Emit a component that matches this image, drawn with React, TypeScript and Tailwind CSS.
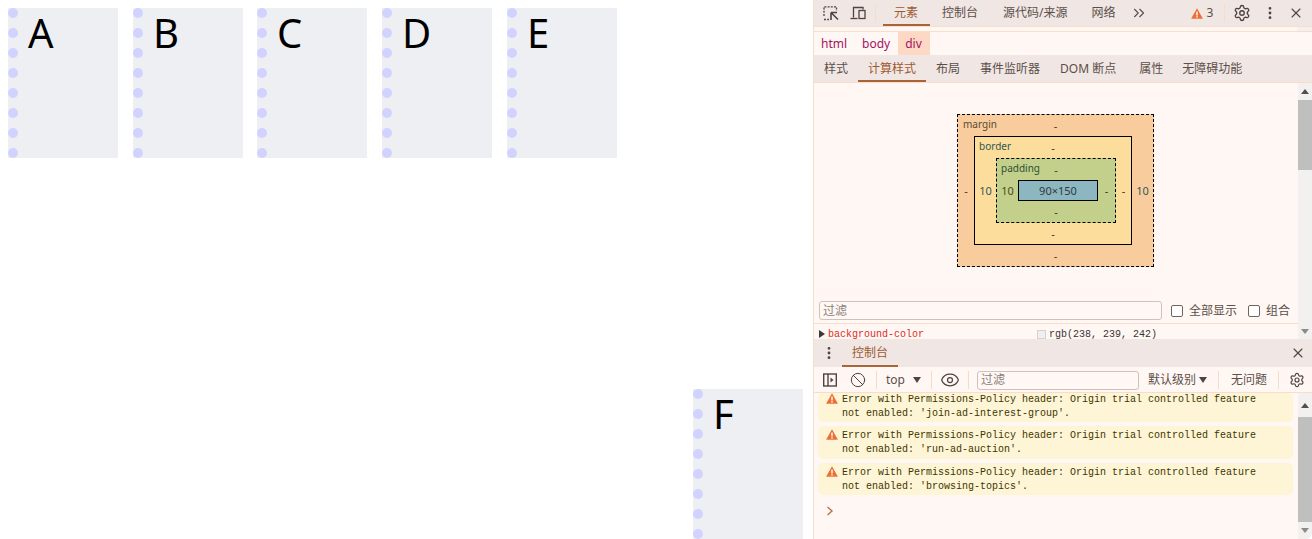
import React from 'react';
import { Settings, X, EllipsisVertical, ChevronsRight, Ban, Eye } from 'lucide-react';

const cjk = { fontFamily: '"Noto Sans", "Noto Sans CJK SC", sans-serif' };

function Sheet({ label, className = '' }: { label: string; className?: string }) {
  return (
    <div className={`relative h-[150px] w-[110px] shrink-0 bg-[#eeeff2] ${className}`}>
      <div className="absolute left-0 top-0 flex flex-col gap-[10px]">
        {[0, 1, 2, 3, 4, 5, 6, 7].map((i) => (
          <div key={i} className="h-[10px] w-[10px] rounded-full bg-[#d2d2ff]" />
        ))}
      </div>
      <div className="pl-[20px] text-[40px] leading-[50px] text-black">{label}</div>
    </div>
  );
}

function Warn({ className = '' }: { className?: string }) {
  return (
    <svg viewBox="0 0 12 11" className={`h-[11px] w-[12px] shrink-0 ${className}`}>
      <path d="M6 0.3 11.9 10.7H0.1Z" fill="#ec6f35" />
      <rect x="5.3" y="3.6" width="1.4" height="3.9" fill="#fff" />
      <rect x="5.3" y="8.2" width="1.4" height="1.4" fill="#fff" />
    </svg>
  );
}

function InspectIcon() {
  return (
    <svg viewBox="0 0 16 16" className="h-4 w-4" fill="none" stroke="#4f4440" strokeWidth="1.3">
      <path d="M1 11V1.8h12.5V6" strokeDasharray="2 1.2" />
      <path d="M1 14.5h5" strokeDasharray="2 1.2" />
      <path d="M8 7.5v7.5M8 7.5h6M8 7.5l7 7" strokeWidth="1.6" />
    </svg>
  );
}

function DeviceIcon() {
  return (
    <svg viewBox="0 0 16 16" className="h-4 w-4" fill="none" stroke="#4f4440" strokeWidth="1.3">
      <path d="M3.5 12.5V2.5h9.5v2" />
      <path d="M0.5 13.5h7" />
      <rect x="9" y="5.5" width="6" height="8" />
    </svg>
  );
}

function SidebarIcon() {
  return (
    <svg viewBox="0 0 14 14" className="h-[14px] w-[14px]" fill="none" stroke="#4f4440" strokeWidth="1.4">
      <rect x="0.7" y="1" width="12.6" height="12" />
      <path d="M5 1v12" />
      <path d="M7.5 4.5v5l3-2.5z" fill="#4f4440" stroke="none" />
    </svg>
  );
}

function Divider() {
  return <div className="h-[18px] w-px shrink-0 bg-[#f8dccb]" />;
}

function Tab({ label, active = false, className = '' }: { label: string; active?: boolean; className?: string }) {
  return (
    <div
      className={`flex h-full items-center whitespace-nowrap border-b-2 pt-[2px] text-[12px] ${
        active ? 'border-[#a9643a] text-[#9c5a33]' : 'border-transparent text-[#5c4f4a]'
      } ${className}`}
    >
      {label}
    </div>
  );
}

function Scrollbar({ top, thumb, after }: { top: number; thumb: number; after: number }) {
  return (
    <div className="flex h-full w-[14px] shrink-0 flex-col items-center bg-[#f3f1f0]">
      <div className="flex w-full items-center justify-center" style={{ height: top }}>
        <div className="h-0 w-0 border-x-[4px] border-b-[5px] border-x-transparent border-b-[#505050]" />
      </div>
      <div className="w-full bg-[#bfbfbf]" style={{ height: thumb }} />
      <div style={{ height: after }} className="w-full" />
      <div className="flex h-[16px] w-full items-center justify-center">
        <div className="h-0 w-0 border-x-[4px] border-t-[5px] border-x-transparent border-t-[#8a8a8a]" />
      </div>
    </div>
  );
}

function Check({ label }: { label: string }) {
  return (
    <div className="flex items-center gap-[6px]">
      <div className="h-[12px] w-[12px] rounded-[2px] border border-[#6f6560] bg-white" />
      <span className="text-[12px] text-[#5c4f4a]">{label}</span>
    </div>
  );
}

function Val({ children, className = '' }: { children: React.ReactNode; className?: string }) {
  return <div className={`flex items-center justify-center text-[11px] leading-none ${className}`}>{children}</div>;
}

function BoxModel() {
  return (
    <div className="relative flex h-[153px] w-[197px] flex-col border border-dashed border-black bg-[#f9cc9d] text-[#3a3a3a]">
      <span className="absolute left-[5px] top-[2px] text-[10px] leading-[14px] text-[#5a4a30]">margin</span>
      <Val className="h-[21px]">-</Val>
      <div className="flex">
        <Val className="w-[16px]">-</Val>
        <div className="relative flex h-[109px] w-[158px] flex-col border border-black bg-[#fddd9b]">
          <span className="absolute left-[4px] top-[2px] text-[10px] leading-[14px] text-[#2f5a50]">border</span>
          <Val className="h-[21px]">-</Val>
          <div className="flex">
            <Val className="w-[21px] text-[#2f5a60]">10</Val>
            <div className="relative flex h-[65px] w-[120px] flex-col border border-dashed border-black bg-[#c3d08b]">
              <span className="absolute left-[4px] top-[2px] text-[10px] leading-[14px] text-[#2f5030]">padding</span>
              <Val className="h-[21px]">-</Val>
              <div className="flex">
                <Val className="w-[21px] text-[#4a4a20]">10</Val>
                <Val className="h-[21px] w-[80px] border border-black bg-[#8cb6c0] text-[#303a40]">90×150</Val>
                <Val className="w-[17px]">-</Val>
              </div>
              <Val className="h-[21px]">-</Val>
            </div>
            <Val className="w-[15px]">-</Val>
          </div>
          <Val className="h-[21px]">-</Val>
        </div>
        <Val className="w-[21px] text-[#2f5a60]">10</Val>
      </div>
      <Val className="h-[21px]">-</Val>
    </div>
  );
}

function Message({ feature, className = '' }: { feature: string; className?: string }) {
  return (
    <div className={`flex rounded-[5px] bg-[#fdf5d6] pl-[8px] ${className}`}>
      <Warn className="mr-[4px]" />
      <div className="text-[10px] leading-[14px] text-[#3f3500]" style={{ fontFamily: '"Liberation Mono", monospace' }}>
        <div className="whitespace-pre">Error with Permissions-Policy header: Origin trial controlled feature</div>
        <div className="whitespace-pre">not enabled: '{feature}'.</div>
      </div>
    </div>
  );
}

export default function App() {
  return (
    <div className="flex h-[539px] w-[1312px] overflow-hidden rounded-b-[6px] bg-white" style={cjk}>
      {/* page */}
      <div className="flex w-[813px] shrink-0 flex-col justify-between">
        <div className="flex pl-[8px] pt-[8px]">
          <Sheet label="A" className="mr-[15px]" />
          <Sheet label="B" className="mr-[14px]" />
          <Sheet label="C" className="mr-[15px]" />
          <Sheet label="D" className="mr-[15px]" />
          <Sheet label="E" />
        </div>
        <Sheet label="F" className="mr-[10px] self-end" />
      </div>

      {/* devtools */}
      <div className="flex w-[499px] shrink-0 flex-col border-l border-[#f8dccb] bg-[#fff7f4]">
        <div className="flex h-[27px] shrink-0 items-center border-b border-[#fbdccb] bg-[#f0e6e3] pl-[9px] text-[#5c4f4a]">
          <InspectIcon />
          <div className="ml-[11px]"><DeviceIcon /></div>
          <div className="ml-[9px] mr-[7px]"><Divider /></div>
          <Tab label="元素" active className="pl-[11px] pr-[12px]" />
          <Tab label="控制台" className="pl-[12px] pr-[12px]" />
          <Tab label="源代码/来源" className="pl-[13px] pr-[12px]" />
          <Tab label="网络" className="px-[12px]" />
          <ChevronsRight size={18} strokeWidth={1.5} className="ml-[2px] text-[#5c4f4a]" />
          <Warn className="ml-[43px]" />
          <span className="ml-[4px] text-[12px]">3</span>
          <div className="ml-[11px] mr-[8px]"><Divider /></div>
          <Settings size={18} strokeWidth={1.8} className="text-[#4f4440]" />
          <EllipsisVertical size={16} strokeWidth={2.2} className="ml-[11px] text-[#4f4440]" />
          <X size={16} strokeWidth={1.6} className="ml-[10px] text-[#4f4440]" />
        </div>
        <div className="flex h-[5px] shrink-0 justify-end border-b border-[#fbdccb]">
          <div className="w-[15px] bg-[#f3f1f0]" />
        </div>
        <div className="flex h-[23px] shrink-0 items-stretch text-[12px] text-[#a5125e]">
          <span className="flex items-center pl-[7px] pr-[8px]">html</span>
          <span className="flex items-center pl-[7px] pr-[8px]">body</span>
          <span className="flex items-center bg-[#fdd9c5] pl-[7px] pr-[8px]">div</span>
        </div>
        <div className="flex h-[28px] shrink-0 items-center border-b border-[#fbdccb] bg-[#f0e6e3]">
          <Tab label="样式" className="px-[10px]" />
          <Tab label="计算样式" active className="px-[10px]" />
          <Tab label="布局" className="px-[10px]" />
          <Tab label="事件监听器" className="px-[10px]" />
          <Tab label="DOM 断点" className="pl-[10px] pr-[13px]" />
          <Tab label="属性" className="pl-[10px] pr-[9px]" />
          <Tab label="无障碍功能" className="px-[10px]" />
        </div>

        {/* computed pane */}
        <div className="flex h-[256px] shrink-0">
          <div className="flex min-w-0 flex-1 flex-col">
            <div className="flex h-[213px] shrink-0 items-start pl-[143px] pt-[31px]">
              <BoxModel />
            </div>
            <div className="flex h-[28px] shrink-0 items-center border-b border-[#fbdccb] pl-[5px] pt-[2px]">
              <div className="flex h-[19px] w-[343px] items-center rounded-[3px] border border-[#cfc2bc] bg-[#fff8f5] pl-[3px] text-[12px] text-[#8c817c]">
                过滤
              </div>
              <div className="ml-[9px]"><Check label="全部显示" /></div>
              <div className="ml-[11px]"><Check label="组合" /></div>
            </div>
            <div className="flex h-[15px] items-center pt-[5px] text-[10px]" style={{ fontFamily: '"Liberation Mono", monospace' }}>
              <div className="ml-[5px] h-0 w-0 border-y-[4px] border-l-[6px] border-y-transparent border-l-[#3f3835]" />
              <span className="ml-[3px] text-[#d93025]">background-color</span>
              <div className="ml-[113px] h-[9px] w-[9px] border border-[#d6d2d0] bg-[#eeeff2]" />
              <span className="ml-[3px] text-[#3a3532]">rgb(238, 239, 242)</span>
            </div>
          </div>
          <Scrollbar top={17} thumb={70} after={153} />
        </div>

        {/* console drawer */}
        <div className="flex h-[28px] shrink-0 items-center bg-[#f0e6e3] pl-[7px]">
          <EllipsisVertical size={16} strokeWidth={2.2} className="text-[#4f4440]" />
          <Tab label="控制台" active className="ml-[5px] px-[10px]" />
          <X size={16} strokeWidth={1.6} className="ml-auto mr-[6px] text-[#4f4440]" />
        </div>
        <div className="flex h-[26px] shrink-0 items-center border-b border-[#fbdccb] pl-[9px] pt-[1px] text-[12px] text-[#5c4f4a]">
          <SidebarIcon />
          <Ban size={16} strokeWidth={1.5} className="ml-[13px] text-[#4f4440]" />
          <div className="ml-[10px] mr-[9px]"><Divider /></div>
          <span>top</span>
          <div className="ml-[8px] h-0 w-0 border-x-[4px] border-t-[6px] border-x-transparent border-t-[#4f4440]" />
          <div className="ml-[10px] mr-[8px]"><Divider /></div>
          <Eye size={20} strokeWidth={1.5} className="text-[#4f4440]" />
          <div className="ml-[8px] mr-[8px]"><Divider /></div>
          <div className="flex h-[19px] w-[162px] items-center rounded-[3px] border border-[#cfc2bc] bg-[#fff8f5] pl-[3px] text-[#8c817c]">
            过滤
          </div>
          <span className="ml-[9px]">默认级别</span>
          <div className="ml-[3px] h-0 w-0 border-x-[4px] border-t-[6px] border-x-transparent border-t-[#4f4440]" />
          <div className="ml-[11px] mr-[12px]"><Divider /></div>
          <span>无问题</span>
          <div className="ml-[11px] mr-[10px]"><Divider /></div>
          <Settings size={16} strokeWidth={1.8} className="text-[#4f4440]" />
        </div>
        <div className="flex min-h-0 flex-1">
          <div className="flex min-w-0 flex-1 flex-col gap-[4px] pl-[4px] pr-[5px]">
            <Message feature="join-ad-interest-group" className="h-[29px]" />
            <Message feature="run-ad-auction" className="h-[33px] pt-[3px]" />
            <Message feature="browsing-topics" className="h-[32px] pt-[3px]" />
            <div className="ml-[8px] mt-[7px] text-[#b5754d]">
              <svg viewBox="0 0 8 10" className="h-[10px] w-[8px]" fill="none" stroke="currentColor" strokeWidth="1.4">
                <path d="M1.5 1 6 5 1.5 9" />
              </svg>
            </div>
          </div>
          <Scrollbar top={24} thumb={105} after={0} />
        </div>
      </div>
    </div>
  );
}
